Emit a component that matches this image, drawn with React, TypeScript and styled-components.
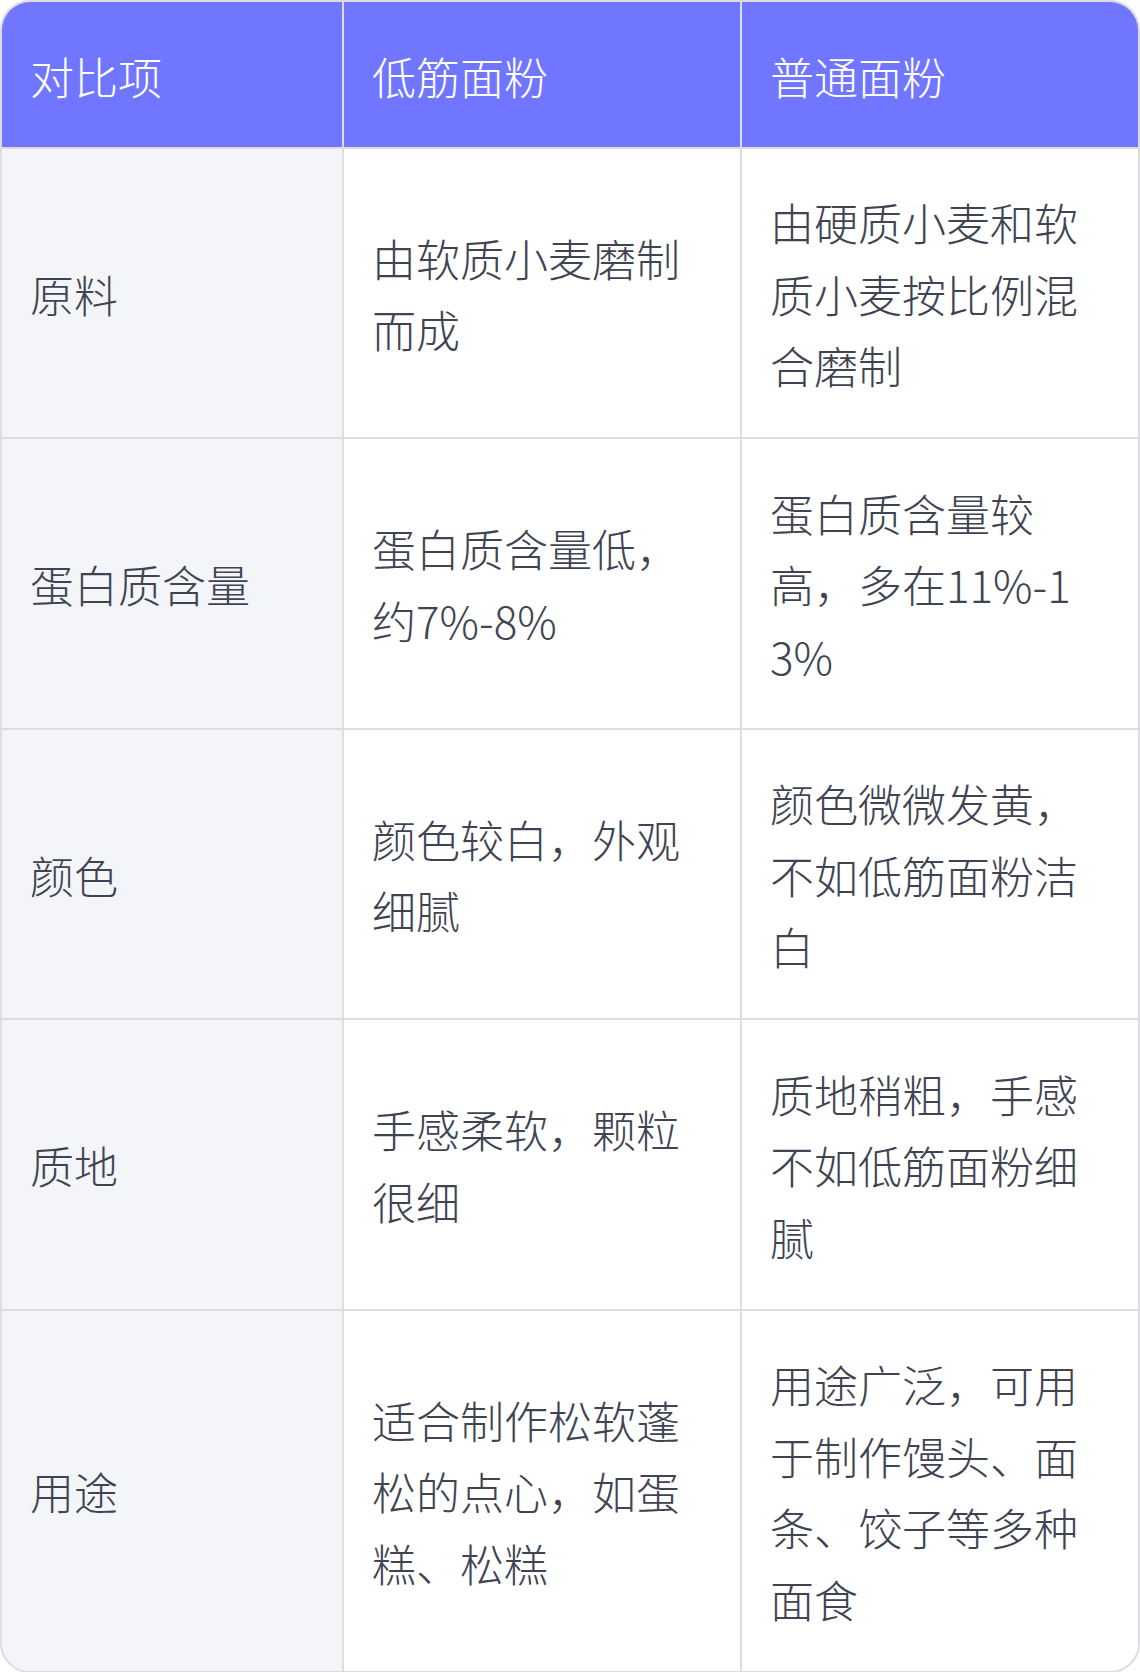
import React from 'react';
import styled, { createGlobalStyle } from 'styled-components';

const GlobalStyle = createGlobalStyle`
  html, body {
    margin: 0;
    padding: 0;
    background: #ffffff;
  }
  body {
    font-family: "Noto Sans CJK SC", "Noto Sans", sans-serif;
  }
`;

interface Row {
  label: string;
  low: string;
  normal: string;
}

const rows: Row[] = [
  { label: '原料', low: '由软质小麦磨制而成', normal: '由硬质小麦和软质小麦按比例混合磨制' },
  { label: '蛋白质含量', low: '蛋白质含量低，约7%-8%', normal: '蛋白质含量较高，多在11%-13%' },
  { label: '颜色', low: '颜色较白，外观细腻', normal: '颜色微微发黄，不如低筋面粉洁白' },
  { label: '质地', low: '手感柔软，颗粒很细', normal: '质地稍粗，手感不如低筋面粉细腻' },
  { label: '用途', low: '适合制作松软蓬松的点心，如蛋糕、松糕', normal: '用途广泛，可用于制作馒头、面条、饺子等多种面食' },
];

const App: React.FC = () => {
  return (
    <>
      <GlobalStyle />
      <Wrapper>
        <Table>
          <colgroup>
            <col style={{ width: 341 }} />
            <col style={{ width: 398 }} />
            <col />
          </colgroup>
          <thead>
            <tr>
              <HeadCell>对比项</HeadCell>
              <HeadCell>低筋面粉</HeadCell>
              <HeadCell>普通面粉</HeadCell>
            </tr>
          </thead>
          <tbody>
            {rows.map((row) => (
              <tr key={row.label}>
                <Cell label>{row.label}</Cell>
                <Cell>{row.low}</Cell>
                <Cell>{row.normal}</Cell>
              </tr>
            ))}
          </tbody>
        </Table>
      </Wrapper>
    </>
  );
};

export default App;

const Wrapper = styled.div`
  width: 1140px;
  box-sizing: border-box;
  border: 2px solid #dcdce1;
  border-radius: 30px;
  overflow: hidden;
`;

const Table = styled.table`
  width: 100%;
  border-collapse: collapse;
  table-layout: fixed;
  font-size: 44px;
  line-height: 71.5px;
  font-weight: 300;
`;

const HeadCell = styled.th`
  background: #7076ff;
  color: #ffffff;
  font-weight: 300;
  text-align: left;
  padding: 39px 30px 34px 28px;
  border-left: 2px solid #dcdce1;
  &:first-child {
    border-left: none;
  }
`;

const Cell = styled.td<{ label?: boolean }>`
  background: ${(p) => (p.label ? '#f4f5f9' : '#ffffff')};
  color: #404452;
  padding: 38.5px 30px 35.5px 28px;
  vertical-align: middle;
  border-top: 2px solid #dcdce1;
  border-left: 2px solid #dcdce1;
  word-break: break-all;
  &:first-child {
    border-left: none;
  }
`;
